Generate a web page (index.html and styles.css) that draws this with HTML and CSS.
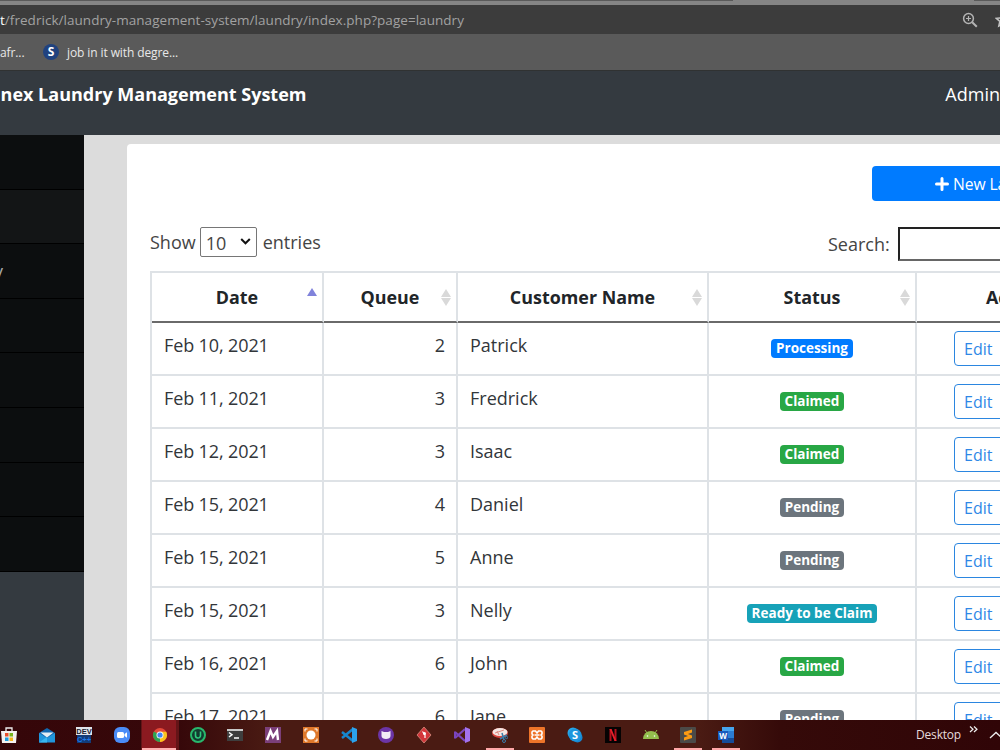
FILE: index.html
```html
<!DOCTYPE html>
<html lang="en">
<head>
    <meta charset="UTF-8">
    <meta name="viewport" content="width=device-width, initial-scale=1.0">
    <title>Laundry Management System</title>
    <link rel="stylesheet" href="styles.css">
</head>
<body>
    <div class="tabstrip"><span class="tab-edge"></span><span class="tab-edge tab-edge-right"></span></div>
    <div class="urlbar">
        <div class="url"><b>t</b>/fredrick/laundry-management-system/laundry/index.php?page=laundry</div>
        <svg class="zoom-icon" width="16" height="16" viewBox="0 0 16 16" fill="none" stroke="#b4b4b4" stroke-width="1.5">
            <circle cx="6.5" cy="6.5" r="4.9"/><path d="M10.2 10.2L14.8 14.8" stroke-width="2"/><path d="M4 6.5h5M6.5 4v5" stroke-width="1.2"/>
        </svg>
        <svg class="star-icon" width="16" height="16" viewBox="0 0 16 16" fill="none" stroke="#c4c4c4" stroke-width="1.5">
            <path d="M8 1.5l2 4.3 4.7.5-3.5 3.1 1 4.6L8 11.7 3.8 14l1-4.6L1.3 6.3 6 5.8z"/>
        </svg>
    </div>
    <div class="bookmarks">
        <span class="bookmark-first">afr...</span>
        <span class="favicon">S</span>
        <span>job in it with degre...</span>
    </div>

    <header class="topbar">
        <div class="brand"><span>nnex Laundry Management System</span></div>
        <div class="user">Admin</div>
    </header>

    <div class="content">
        <nav class="sidebar">
            <a></a>
            <a class="hover"></a>
            <a><span>y</span></a>
            <a></a>
            <a></a>
            <a></a>
            <a></a>
            <a></a>
        </nav>
        <main class="main">
            <div class="card">
                <div class="actions">
                    <button class="btn-new"><svg width="14" height="14" viewBox="0 0 14 14"><path d="M7 1.5v11M1.5 7h11" stroke="#fff" stroke-width="3" stroke-linecap="round"/></svg>New Laundry</button>
                </div>
                <div class="filters">
                    <div class="length">Show <span class="select">10<svg width="11" height="7" viewBox="0 0 11 7"><path d="M1.2 1l4.3 4.3L9.8 1" fill="none" stroke="#111" stroke-width="2"/></svg></span> entries</div>
                    <div class="search">Search: <span class="search-input"></span></div>
                </div>
                <table class="table">
                    <colgroup><col class="c-date"><col class="c-queue"><col class="c-name"><col class="c-status"><col class="c-action"></colgroup>
                    <thead>
                        <tr>
                            <th class="asc">Date</th>
                            <th class="sort">Queue</th>
                            <th class="sort">Customer Name</th>
                            <th class="sort">Status</th>
                            <th>Action</th>
                        </tr>
                    </thead>
                    <tbody>
                        <tr><td class="date">Feb 10, 2021</td><td class="right">2</td><td>Patrick</td><td class="center"><span class="badge primary">Processing</span></td><td class="center"><button class="btn-edit">Edit</button></td></tr>
                        <tr><td class="date">Feb 11, 2021</td><td class="right">3</td><td>Fredrick</td><td class="center"><span class="badge success">Claimed</span></td><td class="center"><button class="btn-edit">Edit</button></td></tr>
                        <tr><td class="date">Feb 12, 2021</td><td class="right">3</td><td>Isaac</td><td class="center"><span class="badge success">Claimed</span></td><td class="center"><button class="btn-edit">Edit</button></td></tr>
                        <tr><td class="date">Feb 15, 2021</td><td class="right">4</td><td>Daniel</td><td class="center"><span class="badge secondary">Pending</span></td><td class="center"><button class="btn-edit">Edit</button></td></tr>
                        <tr><td class="date">Feb 15, 2021</td><td class="right">5</td><td>Anne</td><td class="center"><span class="badge secondary">Pending</span></td><td class="center"><button class="btn-edit">Edit</button></td></tr>
                        <tr><td class="date">Feb 15, 2021</td><td class="right">3</td><td>Nelly</td><td class="center"><span class="badge info">Ready to be Claim</span></td><td class="center"><button class="btn-edit">Edit</button></td></tr>
                        <tr><td class="date">Feb 16, 2021</td><td class="right">6</td><td>John</td><td class="center"><span class="badge success">Claimed</span></td><td class="center"><button class="btn-edit">Edit</button></td></tr>
                        <tr><td class="date">Feb 17, 2021</td><td class="right">6</td><td>Jane</td><td class="center"><span class="badge secondary">Pending</span></td><td class="center"><button class="btn-edit">Edit</button></td></tr>
                    </tbody>
                </table>
            </div>
        </main>
    </div>

    <footer class="taskbar">
        <div class="apps">
            <!-- store -->
            <span><svg viewBox="0 0 16 16"><path d="M5 4V1h6v3" fill="none" stroke="#eee" stroke-width="1.3"/><path d="M0 4h16l-1 12H1z" fill="#f4f1f0"/><path d="M4 6h3.5v3.5H4z" fill="#e8502c"/><path d="M8.5 6H12v3.5H8.5z" fill="#78b41e"/><path d="M4 10.5h3.5V14H4z" fill="#1c9ee0"/><path d="M8.5 10.5H12V14H8.5z" fill="#f6b51c"/></svg></span>
            <!-- mail -->
            <span><svg viewBox="0 0 16 16"><path d="M0 6l8-5 8 5v9H0z" fill="#1268b0"/><path d="M0 6l8 5 8-5v9.5H0z" fill="#2096dc"/><path d="M1.500 5.500h13L8 10.500z" fill="#e4eef5"/><path d="M0 15.5L8 10v5.5z" fill="#38b6ef"/></svg></span>
            <!-- dev -->
            <span><svg viewBox="0 0 16 16"><path d="M1 8h14v8H1z" fill="#123b78"/><path d="M0 0h16v8H0z" fill="#dfe3ea"/><text x="8" y="7.3" class="t-dev" fill="#172030">DEV</text><text x="8" y="15" class="t-dev" fill="#1c78e8">C++</text></svg></span>
            <!-- zoom -->
            <span><svg viewBox="0 0 16 16"><rect width="16" height="16" rx="6" fill="#4a8cf7"/><rect x="3" y="5" width="7" height="6" rx="1.5" fill="#fff"/><path d="M10.5 7L13 5.2v5.6L10.5 9z" fill="#fff"/></svg></span>
            <!-- chrome -->
            <span class="active"><svg viewBox="0 0 16 16"><circle cx="8" cy="8" r="7" fill="#e5493a"/><path d="M8 8L1.9 4.5A7 7 0 0 0 8 15l3.2-5.3z" fill="#2fa352"/><path d="M8 8V4.7h6.2A7 7 0 0 1 8 15z" fill="#fbc31c"/><circle cx="8" cy="8" r="3.5" fill="#f7f2f2"/><circle cx="8" cy="8" r="2.6" fill="#4285f4"/></svg></span>
            <!-- uninstaller -->
            <span><svg viewBox="0 0 16 16"><circle cx="8" cy="8" r="7" fill="#123c30" stroke="#28b86c" stroke-width="2"/><path d="M5.5 4.5v4a2.5 2.5 0 0 0 5 0v-4" fill="none" stroke="#2fcb7c" stroke-width="1.6"/></svg></span>
            <!-- terminal -->
            <span><svg viewBox="0 0 16 16"><path d="M0 2h16v12H0z" fill="#3e3e3e"/><path d="M0 2h16v2H0z" fill="#c8c8c8"/><path d="M2 5.5l3 2.2L2 10M7 11h5" fill="none" stroke="#fff" stroke-width="1.5"/></svg></span>
            <!-- M -->
            <span><svg viewBox="0 0 16 16"><path d="M0 0h16v16H0z" fill="#7b3f79"/><path d="M2 13L5.5 4 8 10l4-6 1 9" fill="none" stroke="#fff" stroke-width="2.4"/></svg></span>
            <!-- recorder -->
            <span><svg viewBox="0 0 16 16"><path d="M0 0h16v16H0z" fill="#df782b"/><circle cx="8" cy="8" r="4.5" fill="#fff"/><path d="M2 4.5V2h2.5M11.5 2H14v2.5M14 11.5V14h-2.5M4.5 14H2v-2.5" fill="none" stroke="#fff"/></svg></span>
            <!-- vs code -->
            <span><svg viewBox="0 0 16 16"><path d="M12 2L1 11M1 5l11 9" stroke="#1687cf" stroke-width="2.5"/><path d="M11 0l5 2v12l-5 2z" fill="#2ca2ed"/></svg></span>
            <!-- github -->
            <span><svg viewBox="0 0 16 16"><circle cx="8" cy="8" r="8" fill="#6c35a6"/><path d="M3.5 4L6 5h4l2.5-1v5c0 2-2 3-4.500 3s-4.500-1-4.500-3z" fill="#f2edf6"/></svg></span>
            <!-- git -->
            <span><svg viewBox="0 0 16 16"><path d="M8 0l7 8-7 8-7-8z" fill="#d3363b" stroke="#d78f80" stroke-width=".8"/><path d="M6.5 4.5L9 8v3" fill="none" stroke="#fff" stroke-width="1.2"/><circle cx="8.5" cy="6.5" r="1.5" fill="#fff"/></svg></span>
            <!-- visual studio -->
            <span><svg viewBox="0 0 16 16"><path d="M1 5l10 9M1 11L11 2M1 4.5v7" fill="none" stroke="#7a45bd" stroke-width="2.2"/><path d="M11 0l5 2v12l-5 2z" fill="#a372ef"/></svg></span>
            <!-- snipping tool -->
            <span class="open"><svg viewBox="0 0 16 16"><ellipse cx="8" cy="6" rx="8" ry="5" fill="#d9463f"/><ellipse cx="8" cy="5" rx="7.5" ry="4" fill="#f3e6e3"/><path d="M3 6l9-3M7 8L5 4" stroke="#dd8c84"/><path d="M10 6l2 7M15 8l-7 4" stroke="#3b7caa" stroke-width="1.5"/><circle cx="12" cy="14" r="1.5" fill="none" stroke="#3b7caa"/><circle cx="14.5" cy="10.5" r="1.2" fill="none" stroke="#3b7caa"/></svg></span>
            <!-- xampp -->
            <span><svg viewBox="0 0 16 16"><rect width="16" height="16" rx="1" fill="#ee7429"/><path d="M4 4h2.500L8 6l1.500-2H12l1 1v2l-1 1 1 1v2l-1 1H9.500L8 10l-1.500 2H4l-1-1V9l1-1-1-1V5zM5.500 8h5" fill="none" stroke="#fff" stroke-width="1.6"/></svg></span>
            <!-- skype -->
            <span><svg viewBox="0 0 16 16"><circle cx="6" cy="6" r="5.5" fill="#28a8ea"/><circle cx="10.5" cy="10.5" r="5" fill="#1688d4"/><circle cx="8" cy="8" r="6.5" fill="#1c96dd"/><text x="8" y="12" class="t-s" fill="#fff">S</text></svg></span>
            <!-- netflix -->
            <span><svg viewBox="0 0 16 16"><path d="M0 0h16v16H0z" fill="#050303"/><path d="M5.5 14V2M10.5 14V2" stroke="#b3101c" stroke-width="2"/><path d="M4.5 2h2l5 12h-2z" fill="#e8202b"/></svg></span>
            <!-- android -->
            <span><svg viewBox="0 0 16 16"><path d="M0 12a8 8 0 0 1 16 0z" fill="#94c04e"/><path d="M4 6L2 3M12 6l2-3" stroke="#94c04e"/><circle cx="4.5" cy="9" r=".8" fill="#fff"/><circle cx="11.5" cy="9" r=".8" fill="#fff"/></svg></span>
            <!-- sublime -->
            <span class="open"><svg viewBox="0 0 16 16"><rect width="16" height="16" rx="1" fill="#4b4a48"/><path d="M4 5l8-2.5v3L8 7l4 1.5V11l-8 2.5v-3L8 9 4 7.500z" fill="#fb9a12"/></svg></span>
            <!-- word -->
            <span class="open"><svg viewBox="0 0 16 16"><path d="M4 0h12v16H4z" fill="#2b7cd3"/><path d="M4 0h12v4H4z" fill="#46a5ee"/><path d="M4 11h12v5H4z" fill="#164c98"/><path d="M0 4h10v9H0z" fill="#185abd"/><text x="5" y="11.5" class="t-w" fill="#fff">W</text></svg></span>
        </div>
        <div class="tray">
            <span>Desktop</span>
            <svg class="more" width="9" height="7" viewBox="0 0 9 7"><path d="M1 .5l3 2.700L1 6M5 .5l3 2.700L5 6" fill="none" stroke="#eee" stroke-width="1.2"/></svg>
            <svg class="up" width="14" height="8" viewBox="0 0 14 8"><path d="M1 7l6-5.5L13 7" fill="none" stroke="#eee" stroke-width="1.3"/></svg>
        </div>
    </footer>
</body>
</html>
```

FILE: styles.css
```css
* {
    box-sizing: border-box;
}
body {
    margin: 0;
    width: 1000px;
    height: 750px;
    overflow: hidden;
    display: flex;
    flex-direction: column;
    font-family: "Open Sans", sans-serif;
    font-size: 18px;
    color: #212529;
    background: #343a40;
}

/* browser */
.tabstrip {
    flex: none;
    height: 5px;
    background: #858585;
    display: flex;
    justify-content: space-between;
}
.tab-edge {
    width: 733px;
    height: 1px;
    background: #5a5a5a;
}
.tab-edge-right {
    width: 26px;
}
.urlbar {
    flex: none;
    height: 29px;
    background: #3c3c3c;
    color: #a2a2a2;
    font-size: 13.5px;
    display: flex;
    align-items: center;
}
.url {
    flex: 1;
    white-space: nowrap;
    letter-spacing: 0.04px;
}
.url b {
    color: #fff;
    font-weight: 400;
}
.zoom-icon {
    margin-right: 17px;
}
.star-icon {
    flex: none;
    margin-right: -11px;
}
.bookmarks {
    flex: none;
    height: 37px;
    background: #5a5a5a;
    border-bottom: 1px solid #303232;
    color: #e8e8e8;
    font-size: 12px;
    letter-spacing: -0.1px;
    display: flex;
    align-items: center;
}
.bookmark-first {
    width: 43px;
}
.favicon {
    width: 16px;
    height: 16px;
    margin-right: 8px;
    border-radius: 50%;
    background: #20427f;
    color: #fff;
    font-weight: 700;
    text-align: center;
    line-height: 16px;
}

/* page header */
.topbar {
    flex: none;
    height: 64px;
    padding-top: 11px;
    background: #343a40;
    color: #fff;
    display: flex;
    justify-content: space-between;
    line-height: 25px;
}
.brand {
    width: 306.5px;
    overflow: hidden;
    display: flex;
    justify-content: flex-end;
    white-space: nowrap;
    font-weight: 700;
}
.content {
    flex: 1;
    min-height: 0;
    display: flex;
}
.sidebar {
    width: 84px;
    flex: none;
}
.sidebar a {
    display: block;
    height: 54.6px;
    background: #0c0e0f;
    border-bottom: 1px solid #000;
    color: #a8a8a8;
    padding-top: 15px;
    line-height: 24px;
}
.sidebar a.hover {
    background: #131516;
}
.sidebar a span {
    margin-left: -6px;
}
.main {
    flex: 1;
    min-width: 0;
    overflow: hidden;
    padding: 9px 0 0 43px;
    background: #dcdcdc;
}
.card {
    width: 1000px;
    height: 640px;
    padding: 22px 0 0 23px;
    background: #fff;
    border-radius: 4px;
}
.actions {
    padding-left: 722px;
}
.btn-new {
    display: flex;
    align-items: center;
    width: 240px;
    height: 35px;
    padding: 1px 0 0 63px;
    border: none;
    border-radius: 4px;
    background: #007bff;
    color: #fff;
    font-family: inherit;
    font-size: 15.7px;
    letter-spacing: -0.1px;
}
.btn-new svg {
    margin-right: 4px;
}
.filters {
    display: flex;
    margin-top: 26px;
    height: 44px;
    color: #444;
}
.length {
    width: 678px;
    display: flex;
    gap: 5px;
    line-height: 31px;
}
.select {
    display: flex;
    align-items: center;
    justify-content: space-between;
    width: 57px;
    height: 30px;
    margin: 0 1px 0 -1px;
    padding: 2px 5px 0;
    border: 1px solid #767676;
    border-radius: 2px;
}
.select svg {
    margin-bottom: 3px;
}
.search {
    display: flex;
    gap: 8px;
    line-height: 35px;
}
.search-input {
    width: 220px;
    height: 34px;
    border: 2px solid #222;
    border-bottom-color: #666;
}

/* data table */
.table {
    width: 1000px;
    table-layout: fixed;
    border-collapse: separate;
    border-spacing: 0;
    border-left: 2px solid #dee2e6;
    border-top: 2px solid #dee2e6;
}
.c-date {
    width: 172px;
}
.c-queue {
    width: 134px;
}
.c-name {
    width: 251px;
}
.c-status {
    width: 208px;
}
.table th {
    position: relative;
    height: 50px;
    padding: 0;
    border-right: 2px solid #dee2e6;
    border-bottom: 2px solid #6a6a6a;
    font-size: 17.9px;
    font-weight: 700;
}
.table td {
    height: 53px;
    padding: 10px 12px 0;
    border-right: 2px solid #dee2e6;
    border-bottom: 2px solid #dee2e6;
    color: #32363a;
    vertical-align: top;
    line-height: 25px;
}
.table td.date {
    letter-spacing: -0.12px;
}
.table td.right {
    text-align: right;
    padding-right: 11px;
}
.table td.center {
    text-align: center;
}
.table td.center:nth-child(4) {
    padding-top: 11px;
}
.table th:last-child,
.table td:last-child {
    text-align: left;
}
.table th:last-child {
    padding-left: 69px;
}
.table td:last-child {
    padding: 8px 0 0 37px;
}
.asc::before,
.sort::before,
.sort::after {
    content: "";
    position: absolute;
    right: 5.5px;
    top: 16px;
    border: 5px solid transparent;
    border-top: 0;
    border-bottom: 8px solid #d9d9d9;
}
.asc::before {
    top: 15px;
    border-bottom-color: #8083db;
}
.sort::after {
    top: 25px;
    border-bottom: 0;
    border-top: 8px solid #d9d9d9;
}
.badge {
    display: inline-block;
    height: 19px;
    padding: 0 5px;
    border-radius: 4px;
    color: #fff;
    font-size: 13.5px;
    font-weight: 700;
    line-height: 18px;
}
.primary {
    background: #007bff;
}
.success {
    background: #28a745;
}
.secondary {
    background: #6c757d;
}
.info {
    background: #17a2b8;
}
.btn-edit {
    display: block;
    width: 90px;
    height: 35px;
    padding: 0 9px;
    border: 1px solid #2b86e0;
    border-radius: 4px;
    background: #fff;
    color: #2f87e6;
    font-family: inherit;
    font-size: 16px;
    text-align: left;
}

/* taskbar */
.taskbar {
    flex: none;
    height: 30.5px;
    display: flex;
    justify-content: space-between;
    background: linear-gradient(90deg, #350609 0, #36080a 180px, #4a1b13 270px, #4a1b13 700px, #350a09 780px, #300507 1000px);
    color: #e6dcdc;
    font-size: 12px;
}
.apps {
    display: flex;
    margin-left: -10px;
}
.apps span {
    width: 37.75px;
    padding-top: 7px;
    display: flex;
    justify-content: center;
    align-items: flex-start;
}
.apps svg {
    width: 16px;
    height: 16px;
}
.apps .active {
    background: linear-gradient(#8b1a20, #8b1a20) 1px 0 / 34px 28px no-repeat, linear-gradient(#ffb0b0, #ffb0b0) 1px 28px / 34px 2px no-repeat, #641417;
}
.apps .open {
    background: linear-gradient(#ffa8a8, #ffa8a8) 50% 28px / 28px 2px no-repeat;
}
.t-dev {
    font: 700 7.5px "Liberation Sans", sans-serif;
    text-anchor: middle;
}
.t-s {
    font: 700 11px "Open Sans", sans-serif;
    text-anchor: middle;
}
.t-w {
    font: 700 8px "Open Sans", sans-serif;
    text-anchor: middle;
}
.tray {
    display: flex;
    align-items: center;
    margin-right: -3px;
    letter-spacing: -0.2px;
}
.more {
    margin: 0 11px 10px 8px;
}
```
